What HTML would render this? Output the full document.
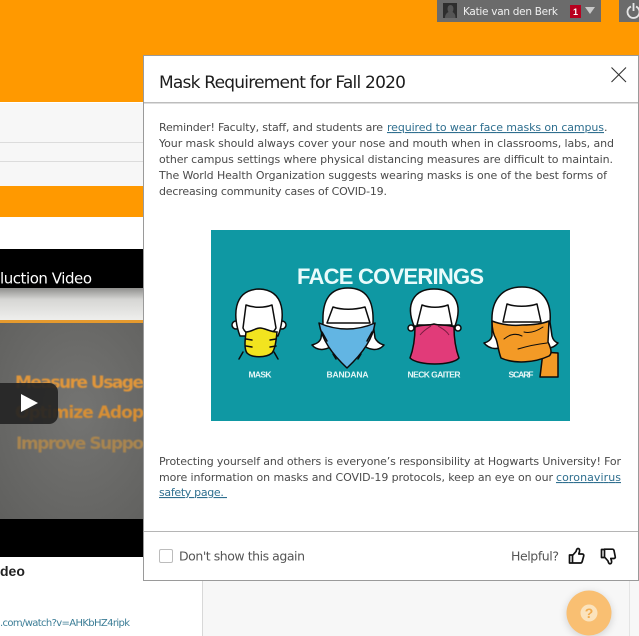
<!DOCTYPE html>
<html>
<head>
<meta charset="utf-8">
<style>
html,body{margin:0;padding:0;width:639px;height:636px;overflow:hidden;background:#fff}
svg{display:block;font-family:"Liberation Sans",sans-serif}
.b{font-family:"DejaVu Sans",sans-serif;font-size:11px;fill:#4a4a4a}
.l{font-family:"DejaVu Sans",sans-serif;font-size:11px;fill:#2f6f8f;text-decoration:underline}
.m{font-weight:bold;font-size:8.500px;fill:#e6f6f6}
.h{fill:#fff;stroke:#0c0c0c;stroke-width:1.500;stroke-linejoin:round}
.n{fill:none;stroke:#0c0c0c;stroke-width:1.500;stroke-linecap:round}
.c{font-family:"DejaVu Sans",sans-serif;font-weight:bold;font-size:17px}
</style>
</head>
<body>
<svg width="639" height="636" viewBox="0 0 639 636" xmlns="http://www.w3.org/2000/svg">
<defs>
<linearGradient id="bar" x1="0" y1="0" x2="0" y2="1"><stop offset="0" stop-color="#8f8f8d"/><stop offset=".35" stop-color="#d6d6d4"/><stop offset="1" stop-color="#f0f0ee"/></linearGradient>
<radialGradient id="ch" cx=".55" cy=".45" r=".85"><stop offset="0" stop-color="#747472"/><stop offset="1" stop-color="#5e5e5c"/></radialGradient>
<filter id="s" x="-40%" y="-40%" width="180%" height="180%"><feGaussianBlur stdDeviation="4"/></filter>
<filter id="bl" x="-5%" y="-5%" width="110%" height="110%"><feGaussianBlur stdDeviation=".4"/></filter>
<clipPath id="left"><rect x="0" y="323" width="143" height="196"/></clipPath>
</defs>

<!-- page -->
<rect width="639" height="636" fill="#fff"/>
<rect width="639" height="102" fill="#ff9900"/>
<rect x="203" y="580" width="436" height="56" fill="#f7f7f7"/>
<rect x="202" y="580" width="1" height="56" fill="#d8d8d8"/>
<rect x="629" y="580" width="1" height="56" fill="#e4e4e4"/>
<rect y="103" width="143" height="83" fill="#f7f7f7"/>
<rect y="142" width="143" height="1" fill="#dcdcdc"/>
<rect y="161" width="143" height="1" fill="#dcdcdc"/>
<rect y="186" width="143" height="31" fill="#ff9900"/>

<!-- top bar -->
<rect x="437" y="0" width="164" height="22" fill="#6b6b6b"/>
<rect x="443" y="3" width="14" height="15" fill="#2e2e2e"/>
<path d="M445 18c0-4 2-5 3.500-6-1.500-2-1.500-7 2-7s3.500 5 2 7c1.500 1 3 2 3 6z" fill="#555"/>
<text x="463" y="15" font-family="DejaVu Sans" font-size="10.500" fill="#f0f0f0" textLength="95" lengthAdjust="spacing">Katie van den Berk</text>
<rect x="570" y="5" width="11" height="13" fill="#b8001f"/>
<text x="575.500" y="15" font-size="9" font-weight="bold" fill="#fff" text-anchor="middle">1</text>
<path d="M585 7h10l-5 7z" fill="#c9c9c9"/>
<rect x="619" y="0" width="20" height="22" fill="#6b6b6b"/>
<path d="M631 6.500a6 6 0 1 0 5 0M633.500 3v8" fill="none" stroke="#e6e6e6" stroke-width="1.800"/>

<!-- video -->
<rect y="249" width="143" height="39" fill="#000"/>
<text x="0" y="283.500" font-family="DejaVu Sans" font-size="15" fill="#fff" textLength="92" lengthAdjust="spacing">luction Video</text>
<rect y="288" width="143" height="33" fill="url(#bar)"/>
<rect y="320" width="143" height="3" fill="#e59a2e"/>
<rect y="323" width="143" height="196" fill="url(#ch)"/>
<g clip-path="url(#left)">
<g filter="url(#bl)">
<text class="c" x="15" y="388" fill="#e0963a" textLength="129" lengthAdjust="spacing">Measure Usage</text>
<text class="c" x="15" y="418" fill="#d78f34" textLength="129" lengthAdjust="spacing">Optimize Adop</text>
<text class="c" x="16" y="449" fill="#a98550" textLength="128" lengthAdjust="spacing">Improve Suppo</text>
</g>
</g>
<rect x="-10" y="383" width="68" height="41" rx="9" fill="#242424" opacity=".92"/>
<path d="M21 394v18l17-9z" fill="#fff"/>
<rect y="519" width="143" height="38" fill="#000"/>
<text x="0" y="576" font-size="14" font-weight="bold" fill="#222">deo</text>
<text x="0" y="626" font-family="DejaVu Sans" font-size="10" fill="#3c7d96" textLength="130" lengthAdjust="spacing">.com/watch?v=AHKbHZ4ripk</text>

<!-- e badge -->
<rect x="604" y="287" width="50" height="45" rx="20" fill="#000" opacity=".25" filter="url(#s)"/>
<rect x="602" y="284" width="50" height="47" rx="22" fill="#fff"/>
<circle cx="632" cy="307" r="10.500" fill="#e8943a"/>
<circle cx="633" cy="307" r="7" fill="#fff"/>
<text x="633" y="312" font-size="14" font-weight="bold" fill="#e8943a" text-anchor="middle">e</text>

<!-- help -->
<circle cx="589" cy="615" r="23" fill="#000" opacity=".14" filter="url(#s)"/>
<circle cx="589" cy="613" r="22.500" fill="#f9bf72"/>
<circle cx="589" cy="613" r="8.500" fill="#fbe3bd"/>
<text x="589" y="618" font-size="14" font-weight="bold" fill="#f2ab4d" text-anchor="middle">?</text>

<!-- modal -->
<rect x="143.500" y="55.500" width="495" height="525" fill="#fff" stroke="#9a9a9a"/>
<rect x="144" y="102" width="494" height="1.500" fill="#bdbdbd"/>
<rect x="144" y="531" width="494" height="1" fill="#b5b5b5"/>
<text x="159" y="88" font-family="DejaVu Sans" font-size="17" fill="#1c1c1c" textLength="247" lengthAdjust="spacing">Mask Requirement for Fall 2020</text>
<path d="M611.500 67.500l14.500 14.500M626 67.500l-14.500 14.500" stroke="#333" stroke-width="1.100" fill="none"/>

<text class="b" x="159" y="131" textLength="224" lengthAdjust="spacing">Reminder! Faculty, staff, and students are</text>
<text class="l" x="387" y="131" textLength="217" lengthAdjust="spacing">required to wear face masks on campus</text>
<text class="b" x="604" y="131">.</text>
<text class="b" x="159" y="147" textLength="455" lengthAdjust="spacing">Your mask should always cover your nose and mouth when in classrooms, labs, and</text>
<text class="b" x="159" y="163" textLength="454" lengthAdjust="spacing">other campus settings where physical distancing measures are difficult to maintain.</text>
<text class="b" x="159" y="179" textLength="448" lengthAdjust="spacing">The World Health Organization suggests wearing masks is one of the best forms of</text>
<text class="b" x="159" y="195" textLength="228" lengthAdjust="spacing">decreasing community cases of COVID-19.</text>

<!-- poster -->
<rect x="211" y="230" width="359" height="191" fill="#0f98a3"/>
<text x="297" y="284" font-size="22" font-weight="bold" fill="#e9fbfb" textLength="187" lengthAdjust="spacing">FACE COVERINGS</text>

<!-- mask -->
<g>
<circle cx="236" cy="325" r="4" class="h"/><circle cx="282" cy="325" r="4" class="h"/>
<path class="h" d="M240 336C233 318 232 290 259 289C286 290 285 318 278 336Z"/>
<path class="h" d="M243 328L246 305C254 308 264 308 272 305L276 328C270 340 248 340 243 328Z"/>
<path class="n" d="M243 352l-4 7M274 352l4 7"/>
<path d="M246 332C252 332 255 328 260 328C265 328 270 332 277 332C276 342 275 349 272 353C266 358 252 358 247 353C244 349 245 340 246 332Z" fill="#f2e41f" stroke="#0c0c0c" stroke-width="1.500"/>
<path class="n" d="M246 339l6 1M246 346l6 1M276 339l-6 1M276 346l-6 1"/>
</g>
<!-- bandana -->
<g>
<path class="h" d="M323 323C322 300 330 288 348 288C366 288 374 300 373 323L375 338C377 342 380 344 384 345C378 352 368 350 362 344L334 344C328 350 318 352 312 345C316 344 320 342 321 338Z"/>
<path class="h" d="M327 323L333 307C342 310 354 310 365 307L370 323Z"/>
<path d="M319 323C328 327 338 329 347 329C356 329 366 327 375 323C373 338 364 352 347 368C332 354 322 340 319 323Z" fill="#62b5e3" stroke="#0c0c0c" stroke-width="1.500" stroke-linejoin="round"/>
<path class="n" d="M322 332l5 9M372 332l-5 9M333 354l3 5M361 354l-3 5"/>
</g>
<!-- gaiter -->
<g>
<circle cx="411" cy="328" r="3" class="h"/><circle cx="458" cy="328" r="3" class="h"/>
<path class="h" d="M414 326C405 304 414 289 434 289C455 289 463 304 455 326Z"/>
<path class="h" d="M417 325L422 305C430 308 440 308 448 305L452 325Z"/>
<path d="M415 327C422 324 428 326 434 324C440 326 448 324 454 327C454 340 456 350 459 358C452 366 418 366 410 358C413 350 415 340 415 327Z" fill="#e13b79" stroke="#0c0c0c" stroke-width="1.500" stroke-linejoin="round"/>
<path d="M420 335C424 330 428 328 431 326M449 335C446 330 441 328 438 326" fill="none" stroke="#7b1c41" stroke-width="1"/>
</g>
<!-- scarf -->
<g>
<path class="h" d="M492 322C491 300 502 287 522 287C541 287 552 300 550 322L552 336C553 340 555 342 558 343C552 350 544 349 538 345L505 345C499 350 490 350 484 343C488 342 491 340 492 336Z"/>
<path class="h" d="M503 322L507 304C515 307 528 307 537 304L541 322Z"/>
<path d="M543 352L558 353L558 377L540 377Z" fill="#f39a26" stroke="#0c0c0c" stroke-width="1.500" stroke-linejoin="round"/>
<path d="M492 321C502 325 514 326 522 325C532 325 542 324 549 321L548 342C552 350 552 354 549 356C534 363 514 364 501 358C498 350 498 344 496 339C493 334 492 328 492 321Z" fill="#f39a26" stroke="#0c0c0c" stroke-width="1.500" stroke-linejoin="round"/>
<path d="M504 339C510 334 516 333 522 336M543 327C534 333 528 333 524 332M518 349C528 346 538 344 547 343" fill="none" stroke="#0c0c0c" stroke-width="1" stroke-linecap="round"/>
</g>

<text class="m" x="248.500" y="377.500" textLength="23" lengthAdjust="spacing">MASK</text>
<text class="m" x="326.500" y="377.500" textLength="42" lengthAdjust="spacing">BANDANA</text>
<text class="m" x="407.500" y="377.500" textLength="53" lengthAdjust="spacing">NECK GAITER</text>
<text class="m" x="508.500" y="377.500" textLength="25" lengthAdjust="spacing">SCARF</text>

<text class="b" x="159" y="465" textLength="462" lengthAdjust="spacing">Protecting yourself and others is everyone’s responsibility at Hogwarts University! For</text>
<text class="b" x="159" y="481" textLength="394" lengthAdjust="spacing">more information on masks and COVID-19 protocols, keep an eye on our</text>
<text class="l" x="556" y="481" textLength="65" lengthAdjust="spacing">coronavirus</text>
<text class="l" x="159" y="496" textLength="68" lengthAdjust="spacing" xml:space="preserve">safety page. </text>

<!-- footer -->
<rect x="159.500" y="549.500" width="13" height="13" rx="1.500" fill="#fff" stroke="#bcbcbc"/>
<text x="179" y="560.500" font-family="DejaVu Sans" font-size="12.500" fill="#555" textLength="126" lengthAdjust="spacing">Don't show this again</text>
<text x="511" y="560.500" font-family="DejaVu Sans" font-size="12.500" fill="#555" textLength="48" lengthAdjust="spacing">Helpful?</text>
<path d="M569.500 555h3v8h-3zM572.500 555.500l3.500-4c.5-2 1-3 2-3s2 1 1.500 3l-.7 2.500h3.500c1.200 0 1.700 1 1.400 2l-1.500 5.500c-.2.700-.7 1.500-1.700 1.500h-8" fill="#fff" stroke="#111" stroke-width="1.700" stroke-linejoin="round"/>
<path d="M601.500 549.500h3v8h-3zM604.500 557l3.500 4c.5 2 1 2.800 2 2.800s2-1 1.500-3l-.7-2.300h3c1.200 0 1.700-1 1.400-2l-1.200-6c-.2-.7-.7-1.300-1.700-1.300h-8.300" fill="#fff" stroke="#111" stroke-width="1.700" stroke-linejoin="round"/>
</svg>
</body>
</html>
